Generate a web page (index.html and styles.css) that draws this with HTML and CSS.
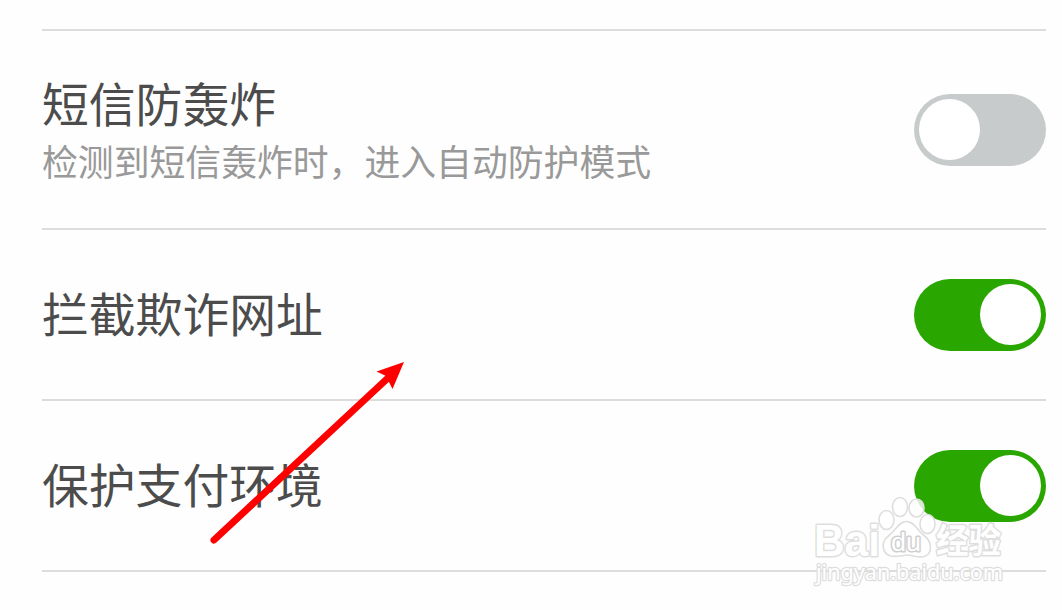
FILE: index.html
```html
<!DOCTYPE html>
<html lang="zh-CN">
<head>
<meta charset="utf-8">
<title>防护设置</title>
<link rel="stylesheet" href="styles.css">
</head>
<body>
<main class="settings">
  <section class="row row-tall">
    <div class="label">
      <h2 class="title">短信防轰炸</h2>
      <p class="desc">检测到短信轰炸时，进入自动防护模式</p>
    </div>
    <div class="switch"><span class="knob"></span></div>
  </section>
  <section class="row">
    <h2 class="title">拦截欺诈网址</h2>
    <div class="switch on"><span class="knob"></span></div>
  </section>
  <section class="row">
    <h2 class="title">保护支付环境</h2>
    <div class="switch on"><span class="knob"></span></div>
  </section>
</main>
<svg class="overlay" viewBox="0 0 1062 610" aria-hidden="true">
  <g class="mark">
    <text class="brand" x="814" y="555.500" textLength="66" lengthAdjust="spacingAndGlyphs">Bai</text>
    <ellipse cx="886.500" cy="520" rx="7.500" ry="9.500"/>
    <ellipse cx="900" cy="507" rx="7.500" ry="9.500"/>
    <ellipse cx="916.500" cy="508" rx="7.500" ry="9"/>
    <ellipse cx="927.500" cy="524" rx="7.500" ry="9.500"/>
    <path d="M906.500 521.500C899 521.500 896 530 889 535.500C880 542 882 554 891 556C899 557.500 902 555 907 555C913 555 917 558 924 556.500C933 554 932 541 924 535.500C917 530 914 521.500 906.500 521.500Z"/>
    <text class="du" x="891" y="551" textLength="30" lengthAdjust="spacingAndGlyphs">du</text>
    <text class="cn" x="936" y="553" textLength="65" lengthAdjust="spacingAndGlyphs">经验</text>
    <text class="site" x="816" y="580" textLength="187" lengthAdjust="spacingAndGlyphs">jingyan.baidu.com</text>
  </g>
  <path class="shaft" d="M214 540L389 377"/>
  <path class="head" d="M404 362L376.500 371.500L386 376L392.500 389Z"/>
</svg>
</body>
</html>
```
FILE: styles.css
```css
body {
  margin: 0;
  height: 610px;
  overflow: hidden;
  background: #fefefe;
  font-family: "Noto Sans CJK SC", sans-serif;
}
.settings {
  margin: 29px 16px 0 42px;
  border-top: 2px solid #dcdcdc;
}
.row {
  box-sizing: border-box;
  height: 171px;
  display: flex;
  align-items: center;
  justify-content: space-between;
  border-bottom: 2px solid #dcdcdc;
}
.row-tall { height: 199px; }
.title, .desc {
  margin: 0;
  font-weight: 400;
  white-space: nowrap;
}
.title {
  padding-bottom: 6px;
  font-size: 46.800px;
  line-height: 60px;
  color: #4c4c4c;
}
.label .title {
  padding-bottom: 2px;
  line-height: 58px;
}
.desc {
  font-size: 35.850px;
  line-height: 54px;
  color: #999;
}
.switch {
  box-sizing: border-box;
  width: 132px;
  height: 72px;
  padding: 0 5px;
  display: flex;
  align-items: center;
  border-radius: 36px;
  background: #c7cbcc;
}
.switch.on {
  justify-content: flex-end;
  background: #2aa600;
}
.knob {
  width: 61px;
  height: 61px;
  border-radius: 50%;
  background: #fff;
}
.overlay {
  position: absolute;
  left: 0;
  top: 0;
  width: 1062px;
  height: 610px;
}
.mark {
  fill: #fff;
  fill-opacity: .8;
  stroke: #dedede;
  stroke-width: 1.600px;
  stroke-linejoin: round;
  font-family: "Liberation Sans", sans-serif;
}
.mark text {
  fill-opacity: 1;
  stroke-width: 3px;
  paint-order: stroke;
}
.mark .brand { font-size: 44px; font-weight: 700; }
.mark .du { font-size: 26px; stroke: #cfcfcf; }
.mark .cn { font-size: 34px; font-weight: 700; font-family: "Noto Sans CJK SC", sans-serif; }
.mark .site { font-size: 21px; font-family: "Noto Sans", sans-serif; stroke-width: 2.500px; }
.shaft {
  fill: none;
  stroke: #f00;
  stroke-width: 7px;
  stroke-linecap: round;
}
.head { fill: #f00; }
```
